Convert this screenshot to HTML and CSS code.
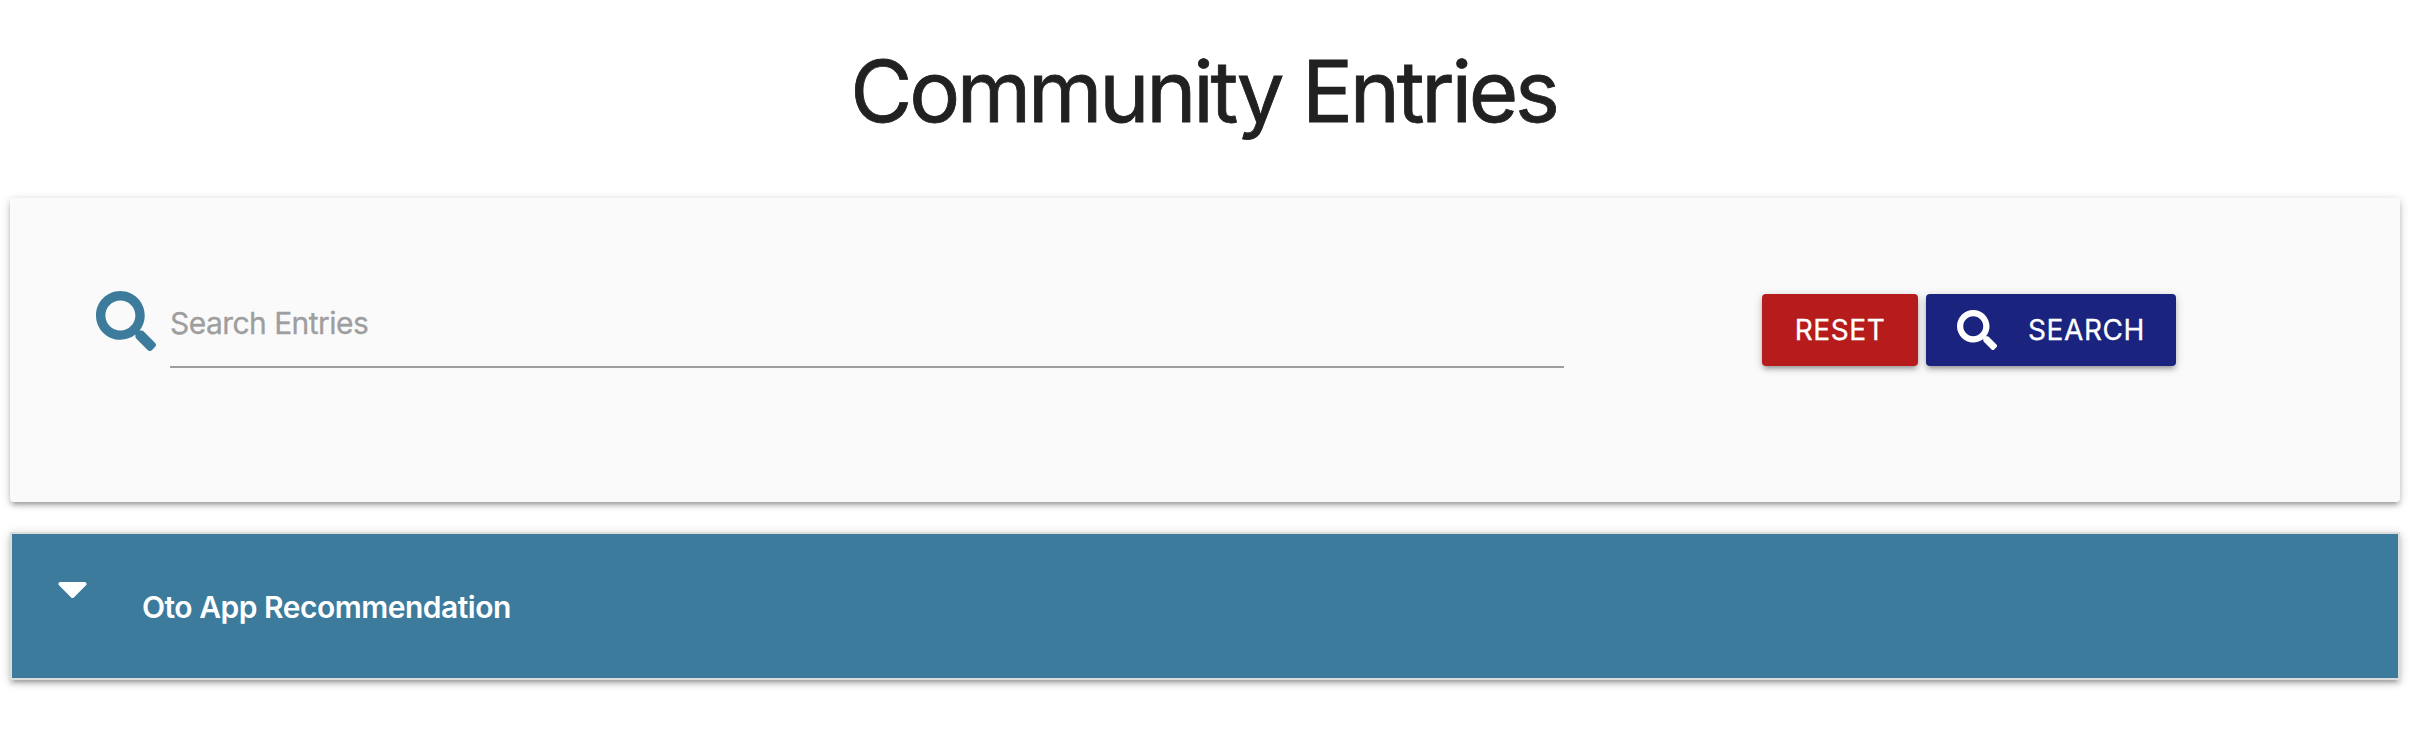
FILE: index.html
```html
<!DOCTYPE html>
<html lang="en">
<head>
<meta charset="utf-8">
<title>Community Entries</title>
<link rel="stylesheet" href="styles.css">
</head>
<body>
<main class="page">
  <h1 class="page-title">Community Entries</h1>
  <form class="search-panel">
    <svg class="field-icon" viewBox="0 0 512 512" aria-hidden="true"><path fill="currentColor" d="M505 442.7L405.3 343c-4.5-4.5-10.6-7-17-7H372c27.6-35.3 44-79.7 44-128C416 93.1 322.9 0 208 0S0 93.1 0 208s93.1 208 208 208c48.3 0 92.7-16.4 128-44v16.3c0 6.4 2.5 12.5 7 17l99.7 99.7c9.4 9.4 24.6 9.4 33.9 0l28.3-28.3c9.4-9.4 9.4-24.6.1-34zM208 336c-70.7 0-128-57.2-128-128 0-70.7 57.2-128 128-128 70.7 0 128 57.2 128 128 0 70.7-57.2 128-128 128z"/></svg>
    <input class="search-input" type="text" placeholder="Search Entries">
    <div class="actions">
      <button class="btn btn-reset" type="button">RESET</button>
      <button class="btn btn-search" type="button">
        <svg class="btn-icon" viewBox="0 0 512 512" aria-hidden="true"><path fill="currentColor" d="M505 442.7L405.3 343c-4.5-4.5-10.6-7-17-7H372c27.6-35.3 44-79.7 44-128C416 93.1 322.9 0 208 0S0 93.1 0 208s93.1 208 208 208c48.3 0 92.7-16.4 128-44v16.3c0 6.4 2.5 12.5 7 17l99.7 99.7c9.4 9.4 24.6 9.4 33.9 0l28.3-28.3c9.4-9.4 9.4-24.6.1-34zM208 336c-70.7 0-128-57.2-128-128 0-70.7 57.2-128 128-128 70.7 0 128 57.2 128 128 0 70.7-57.2 128-128 128z"/></svg>
        <span>SEARCH</span>
      </button>
    </div>
  </form>
  <section class="entry">
    <svg class="caret" viewBox="11 192 298 169" aria-hidden="true"><path fill="currentColor" d="M31.3 192h257.3c17.8 0 26.7 21.5 14.1 34.1L174.1 354.7c-7.8 7.8-20.5 7.8-28.3 0L17.2 226.1C4.6 213.5 13.5 192 31.3 192z"/></svg>
    <span class="entry-title">Oto App Recommendation</span>
  </section>
</main>
</body>
</html>
```
FILE: styles.css
```css
* { box-sizing: border-box; }

body {
  margin: 0;
  min-height: 100vh;
  background: #fff;
  color: #212121;
  font-family: Inter, "Liberation Sans", sans-serif;
}

.page { width: 2390px; margin-left: 10px; }

.page-title {
  margin: 0;
  height: 198px;
  padding: 37px 3px 0 0;
  font-size: 85px;
  font-weight: 400;
  line-height: 110px;
  letter-spacing: -3.25px;
  text-align: center;
  -webkit-text-stroke: .8px currentColor;
}

.search-panel, .entry, .btn {
  box-shadow: 0 4px 4px 0 rgba(0,0,0,.14), 0 6px 2px -4px rgba(0,0,0,.12), 0 2px 10px 0 rgba(0,0,0,.2);
}

.search-panel {
  display: flex;
  align-items: flex-start;
  height: 304px;
  padding: 80px 0 0 86px;
  border-radius: 4px;
  background: #fafafa;
}

.field-icon {
  width: 60px;
  height: 60px;
  margin: 13px 14px 0 0;
  color: #3d7b9d;
}

.search-input {
  width: 1394px;
  height: 90px;
  padding: 2px 0 0;
  border: 0;
  border-bottom: 2px solid #9e9e9e;
  outline: 0;
  background: transparent;
  font: 400 30px/36px Inter, "Liberation Sans", sans-serif;
  letter-spacing: -.55px;
}

.search-input::placeholder {
  color: #9e9e9e;
  opacity: 1;
  -webkit-text-stroke: .3px currentColor;
}

.actions { display: flex; gap: 8px; margin: 16px 0 0 198px; }

.btn {
  display: flex;
  align-items: center;
  justify-content: center;
  height: 72px;
  padding: 0;
  border: 0;
  border-radius: 4px;
  color: #fff;
  font: 400 28px/72px Inter, "Liberation Sans", sans-serif;
  letter-spacing: .6px;
  -webkit-text-stroke: .3px currentColor;
}

.btn-reset { width: 156px; background: #b71c1c; }
.btn-search { width: 250px; gap: 31px; background: #1a237e; }
.btn-icon { width: 40px; height: 40px; }

.entry {
  display: flex;
  align-items: flex-start;
  height: 148px;
  margin-top: 30px;
  padding: 48px 0 0 46px;
  border: 2px solid #ddd;
  background: #3d7b9d;
  color: #fff;
}

.caret { width: 29px; height: 16px; }

.entry-title {
  margin: 5px 0 0 55px;
  font-size: 30px;
  font-weight: 600;
  line-height: 40px;
  letter-spacing: -.5px;
}
```
